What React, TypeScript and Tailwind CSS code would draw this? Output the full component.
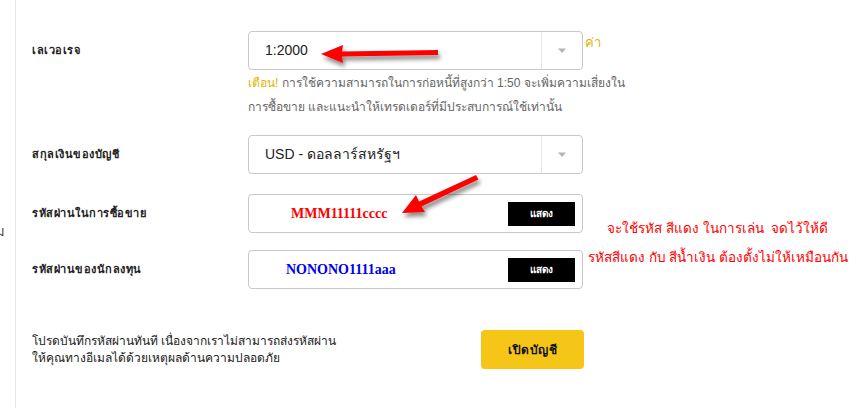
import React from "react";

const thai = { fontFamily: '"Liberation Sans", Tahoma, "DejaVu Sans", sans-serif' };

function Chevron() {
  return (
    <svg width="10" height="6" viewBox="0 0 10 6">
      <path d="M1 0.5 L9 0.5 L5 5 Z" fill="#b5b5b5" />
    </svg>
  );
}

function SelectBox({ value }: { value: string }) {
  return (
    <div className="flex h-[39px] w-[335px] items-center rounded-[4px] border border-[#c8c8c8] bg-white">
      <div className="flex-1 pl-[16px] text-[14px] text-[#222]">{value}</div>
      <div className="flex h-full w-[41px] items-center justify-center border-l border-[#e6e6e6]">
        <Chevron />
      </div>
    </div>
  );
}

function PasswordBox({ value, color, pl }: { value: string; color: string; pl: string }) {
  return (
    <div className="flex h-[39px] w-[335px] items-center rounded-[4px] border border-[#c8c8c8] bg-white pr-[7px]">
      <div
        className={`flex-1 ${pl} text-[14px] font-bold`}
        style={{ fontFamily: '"Liberation Serif", serif', color }}
      >
        {value}
      </div>
      <button className="flex h-[24px] w-[67px] items-center justify-center bg-black text-[10px] font-bold text-white">
        แสดง
      </button>
    </div>
  );
}

function Label({ children }: { children: React.ReactNode }) {
  return (
    <div className="w-[216px] text-[11px] font-semibold tracking-[0.5px] text-[#222]">{children}</div>
  );
}

export default function App() {
  return (
    <div className="relative flex h-[408px] w-[857px] overflow-hidden bg-white" style={thai}>
      <div className="w-[15px] overflow-hidden pt-[222px]">
        <span className="-ml-[4px] block text-[13px] text-[#333]">ม</span>
      </div>

      <div className="flex-1 border-l border-[#e8e8e8] pl-[16px] pt-[31px]">
        <div className="flex items-center">
          <Label>เลเวอเรจ</Label>
          <SelectBox value="1:2000" />
          <span className="-mt-[16px] ml-[2px] text-[13px] text-[#e0b400]">ค่า</span>
        </div>
        <div className="ml-[216px] mt-[1px] whitespace-nowrap text-[12px] leading-[24px] text-[#666]">
          <div>
            <span className="text-[#e0b400]">เตือน!</span> การใช้ความสามารถในการก่อหนี้ที่สูงกว่า 1:50 จะเพิ่มความเสี่ยงใน
          </div>
          <div>การซื้อขาย และแนะนำให้เทรดเดอร์ที่มีประสบการณ์ใช้เท่านั้น</div>
        </div>

        <div className="mt-[16px] flex items-center">
          <Label>สกุลเงินของบัญชี</Label>
          <SelectBox value="USD - ดอลลาร์สหรัฐฯ" />
        </div>

        <div className="mt-[20px] flex items-center">
          <Label>รหัสผ่านในการซื้อขาย</Label>
          <PasswordBox value="MMM11111cccc" color="#ff0000" pl="pl-[42px]" />
        </div>

        <div className="mt-[17px] flex items-center">
          <Label>รหัสผ่านของนักลงทุน</Label>
          <PasswordBox value="NONONO1111aaa" color="#0000ee" pl="pl-[37px]" />
        </div>

        <div className="mt-[41px] flex items-center">
          <div className="w-[449px] whitespace-nowrap text-[12px] leading-[17px] text-[#222]">
            โปรดบันทึกรหัสผ่านทันที เนื่องจากเราไม่สามารถส่งรหัสผ่าน
            <br />
            ให้คุณทางอีเมลได้ด้วยเหตุผลด้านความปลอดภัย
          </div>
          <button className="h-[39px] w-[103px] rounded-[4px] bg-[#f5c518] text-[12px] font-semibold tracking-[0.5px] text-[#111]">
            เปิดบัญชี
          </button>
        </div>
      </div>

      <div className="absolute left-[586px] top-[214px] w-[264px] whitespace-nowrap text-center text-[13.5px] leading-[29px] text-[#ff0000]">
        <div>จะใช้รหัส สีแดง ในการเล่น&nbsp; จดไว้ให้ดี</div>
        <div>รหัสสีแดง กับ สีน้ำเงิน ต้องตั้งไม่ให้เหมือนกัน</div>
      </div>

      <svg className="pointer-events-none absolute left-0 top-0" width="857" height="408">
        <defs>
          <filter id="sh" x="-20%" y="-50%" width="140%" height="200%">
            <feDropShadow dx="2" dy="4" stdDeviation="2" floodColor="#000" floodOpacity="0.45" />
          </filter>
        </defs>
        <g filter="url(#sh)" fill="#ff0000">
          <path d="M438 50 L438 55 L342 56.5 L343 63 L321 54 L343 45 L342 51.5 Z" />
          <path d="M476 175 L478.5 179.5 L421.5 206.5 L425 212 L402 213 L416 195 L419 201.5 Z" />
        </g>
      </svg>
    </div>
  );
}
